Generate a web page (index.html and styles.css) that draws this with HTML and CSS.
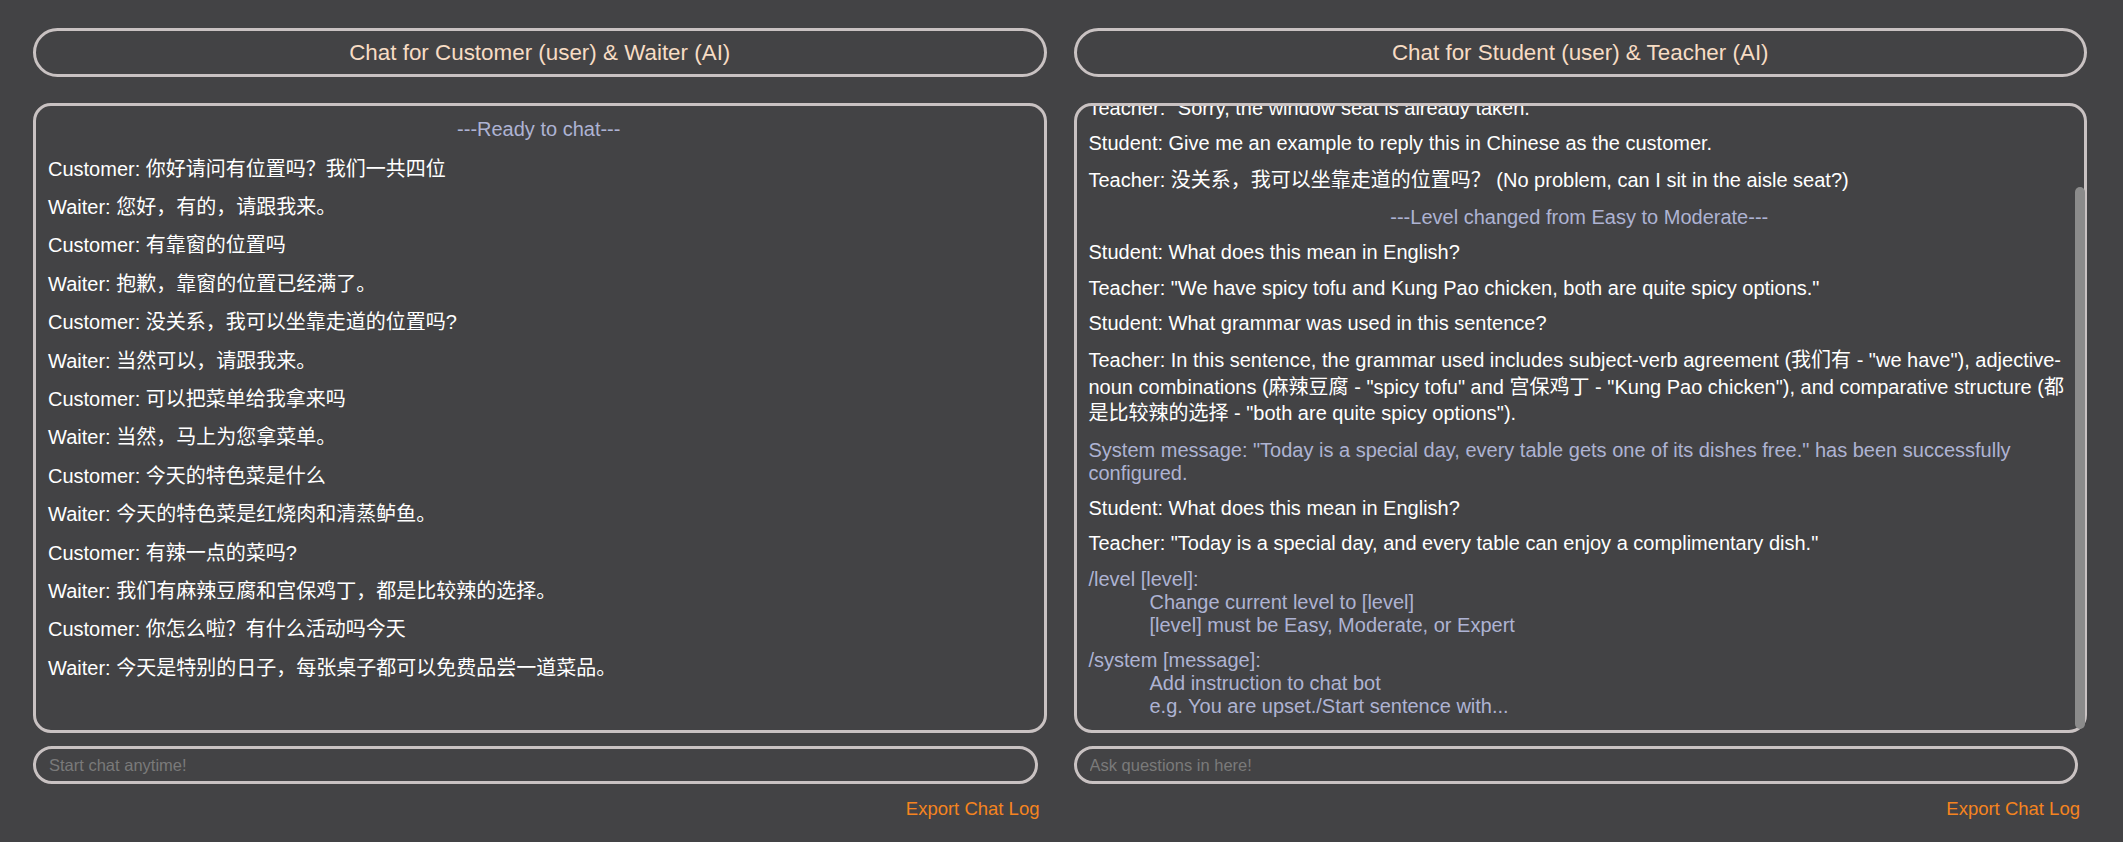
FILE: index.html
```html
<!DOCTYPE html>
<html lang="en">
<head>
<meta charset="utf-8">
<title>Chat</title>
<link rel="stylesheet" href="styles.css">
</head>
<body>
<main class="page">
  <section class="col">
    <h1 class="title">Chat for Customer (user) &amp; Waiter (AI)</h1>
    <div class="chat-wrap">
      <div class="chat">
        <div class="log">
          <div class="msg status">---Ready to chat---</div>
          <div class="msg cjk">Customer: 你好请问有位置吗？我们一共四位</div>
          <div class="msg cjk">Waiter: 您好，有的，请跟我来。</div>
          <div class="msg cjk">Customer: 有靠窗的位置吗</div>
          <div class="msg cjk">Waiter: 抱歉，靠窗的位置已经满了。</div>
          <div class="msg cjk">Customer: 没关系，我可以坐靠走道的位置吗?</div>
          <div class="msg cjk">Waiter: 当然可以，请跟我来。</div>
          <div class="msg cjk">Customer: 可以把菜单给我拿来吗</div>
          <div class="msg cjk">Waiter: 当然，马上为您拿菜单。</div>
          <div class="msg cjk">Customer: 今天的特色菜是什么</div>
          <div class="msg cjk">Waiter: 今天的特色菜是红烧肉和清蒸鲈鱼。</div>
          <div class="msg cjk">Customer: 有辣一点的菜吗?</div>
          <div class="msg cjk">Waiter: 我们有麻辣豆腐和宫保鸡丁，都是比较辣的选择。</div>
          <div class="msg cjk">Customer: 你怎么啦？有什么活动吗今天</div>
          <div class="msg cjk">Waiter: 今天是特别的日子，每张桌子都可以免费品尝一道菜品。</div>
        </div>
      </div>
    </div>
    <div class="composer">
      <input class="field" type="text" placeholder="Start chat anytime!">
      <a class="export" href="#">Export Chat Log</a>
    </div>
  </section>

  <section class="col">
    <h1 class="title">Chat for Student (user) &amp; Teacher (AI)</h1>
    <div class="chat-wrap">
      <div class="chat scroll">
        <div class="log tight">
          <div class="msg status">---Ready to chat---</div>
          <div class="msg">Student: What does this mean in English?</div>
          <div class="msg">Teacher: "Sorry, the window seat is already taken."</div>
          <div class="msg">Student: Give me an example to reply this in Chinese as the customer.</div>
          <div class="msg cjk">Teacher: 没关系，我可以坐靠走道的位置吗？ (No problem, can I sit in the aisle seat?)</div>
          <div class="msg status">---Level changed from Easy to Moderate---</div>
          <div class="msg">Student: What does this mean in English?</div>
          <div class="msg">Teacher: "We have spicy tofu and Kung Pao chicken, both are quite spicy options."</div>
          <div class="msg">Student: What grammar was used in this sentence?</div>
          <div class="msg cjk">Teacher: In this sentence, the grammar used includes subject-verb agreement (我们有 - "we have"), adjective-noun combinations (麻辣豆腐 - "spicy tofu" and 宫保鸡丁 - "Kung Pao chicken"), and comparative structure (都是比较辣的选择 - "both are quite spicy options").</div>
          <div class="msg system">System message: "Today is a special day, every table gets one of its dishes free." has been successfully configured.</div>
          <div class="msg">Student: What does this mean in English?</div>
          <div class="msg">Teacher: "Today is a special day, and every table can enjoy a complimentary dish."</div>
          <div class="msg help">
            <div>/level [level]:</div>
            <div class="indent">Change current level to [level]</div>
            <div class="indent">[level] must be Easy, Moderate, or Expert</div>
          </div>
          <div class="msg help">
            <div>/system [message]:</div>
            <div class="indent">Add instruction to chat bot</div>
            <div class="indent">e.g. You are upset./Start sentence with...</div>
          </div>
        </div>
      </div>
      <div class="thumb"></div>
    </div>
    <div class="composer">
      <input class="field" type="text" placeholder="Ask questions in here!" autofocus>
      <a class="export" href="#">Export Chat Log</a>
    </div>
  </section>
</main>
</body>
</html>
```

FILE: styles.css
```css
html, body {
  margin: 0;
  padding: 0;
  background: #434345;
}

body {
  font-family: "Liberation Sans", "Noto Sans CJK SC", sans-serif;
  color: #ffffff;
}

.page {
  display: grid;
  grid-template-columns: 1fr 1fr;
  column-gap: 27px;
  padding: 28px 36px 0 33px;
}

.col {
  display: flex;
  flex-direction: column;
  min-width: 0;
}

.title {
  margin: 0;
  height: 49px;
  box-sizing: border-box;
  border: 3px solid #c9c2c2;
  border-radius: 25px;
  display: flex;
  align-items: center;
  justify-content: center;
  font-size: 22.4px;
  font-weight: normal;
  color: #f7dcc4;
}

.chat-wrap {
  position: relative;
  margin-top: 26px;
}

.chat {
  height: 630px;
  box-sizing: border-box;
  border: 3px solid #c9c2c2;
  border-radius: 18px;
  overflow-y: auto;
  scrollbar-width: none;
}

.chat::-webkit-scrollbar {
  display: none;
}

.chat.scroll {
  display: flex;
  flex-direction: column-reverse;
}

.thumb {
  position: absolute;
  top: 84px;
  right: 2px;
  width: 10px;
  height: 542px;
  background: #8b8b8b;
  border-radius: 5px;
}

.log {
  padding: 12px 14px 12px 12px;
  flex: none;
}

.msg {
  font-size: 20px;
  line-height: 23px;
}

.msg + .msg {
  margin-top: 12px;
}

.log > .status:first-child + .msg {
  margin-top: 14.5px;
}

.log.tight .msg + .msg {
  margin-top: 12.3px;
}

.msg.cjk {
  line-height: 26.4px;
}

.status {
  text-align: center;
  color: #aeb3d3;
}

.system,
.help {
  color: #aeb3d3;
}

.indent {
  padding-left: 61px;
}

.composer {
  width: calc(100% - 9px);
  display: flex;
  flex-direction: column;
  margin-top: 13px;
}

.field {
  height: 38px;
  box-sizing: border-box;
  border: 3px solid #c9c2c2;
  border-radius: 19px;
  background: transparent;
  padding: 0 13px;
  font-family: "Liberation Sans", sans-serif;
  font-size: 16.5px;
  color: #ffffff;
  caret-color: #ffffff;
  outline: none;
}

.field::placeholder {
  color: #7a7a7a;
}

.export {
  align-self: flex-end;
  margin-top: 14px;
  margin-right: -2px;
  font-size: 18.5px;
  color: #f5841f;
  text-decoration: none;
}
```
